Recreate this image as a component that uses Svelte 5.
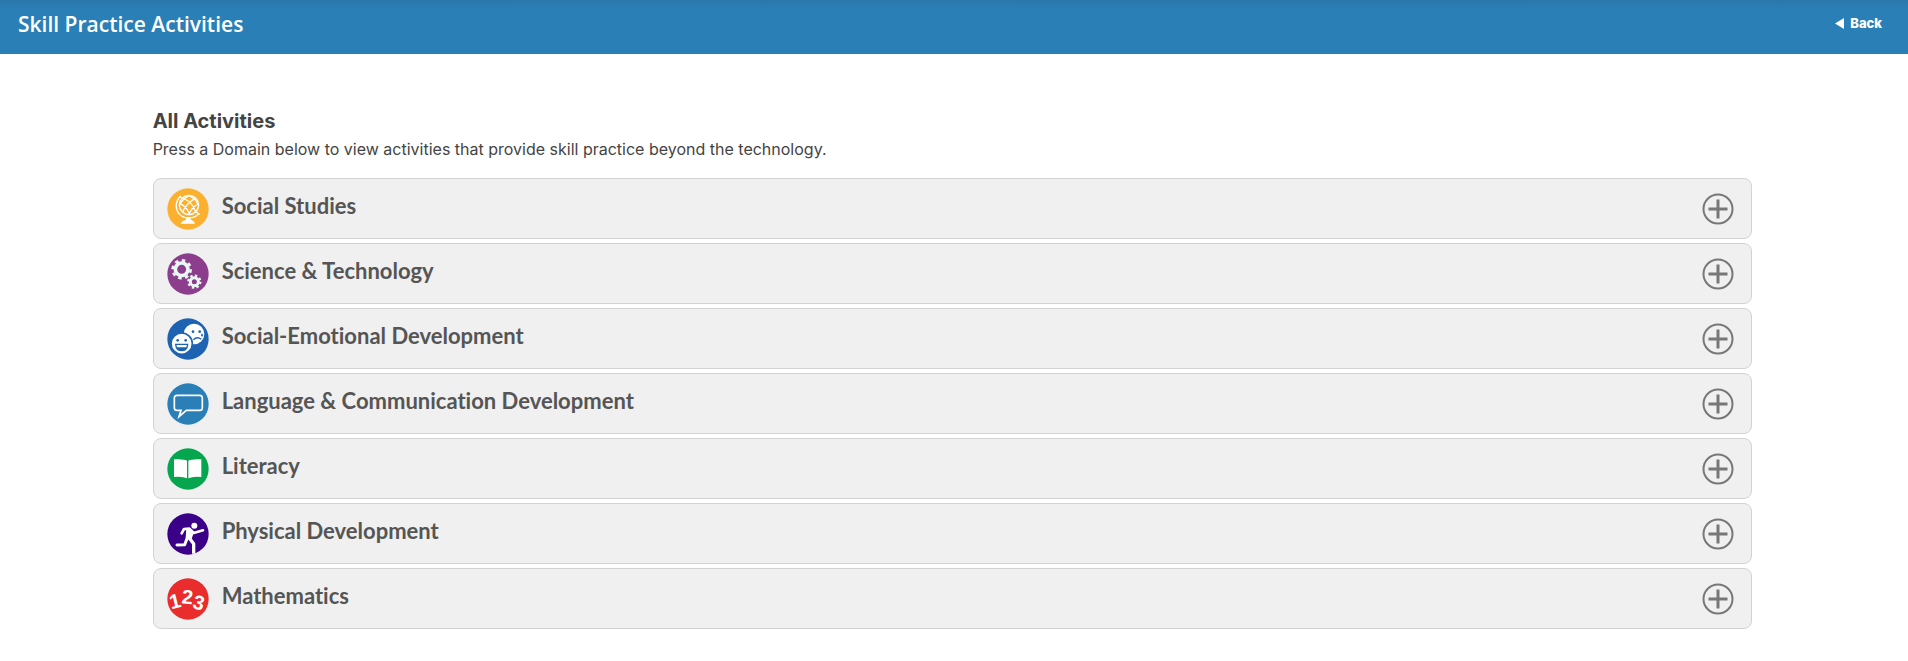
<script lang="ts">
    const domains: { icon: string, label: string, color: string }[] = [
        { icon: "globe", label: "Social Studies", color: "#fbb12f" },
        { icon: "gears", label: "Science & Technology", color: "#8c3e8c" },
        { icon: "faces", label: "Social-Emotional Development", color: "#1d63b2" },
        { icon: "bubble", label: "Language & Communication Development", color: "#2a7fb7" },
        { icon: "book", label: "Literacy", color: "#05a64e" },
        { icon: "runner", label: "Physical Development", color: "#3b0088" },
        { icon: "numbers", label: "Mathematics", color: "#e92d2c" }
    ];
</script>

<header>
    <h1>Skill Practice Activities</h1>
    <a class="back" href="#back">
        <svg width="9" height="11" viewBox="0 0 9 11" aria-hidden="true"><path d="M9 0V11L0 5.5Z" fill="#fff" /></svg>
        Back
    </a>
</header>

<main>
    <h2>All Activities</h2>
    <p>Press a Domain below to view activities that provide skill practice beyond the technology.</p>

    <div class="domains">
        {#each domains as domain}
            <button class="domain">
                <svg class="icon" viewBox="0 0 126 126" aria-hidden="true">
                    <circle cx="63" cy="63" r="62" fill={domain.color} />
                    {#if domain.icon == "globe"}
                        <g fill="none" stroke="#fff" stroke-width="4">
                            <circle cx="66" cy="51" r="29" />
                            <path d="M40 25C20 46 25 79 53 88C70 92 86 88 95 77M38 25L47 31M88 72L97 79" stroke-linecap="round" />
                            <path d="M38 46Q58 54 68 79M47 30Q76 42 86 71M67 23Q86 32 94 50M94 48Q76 56 66 79M86 31Q58 44 47 72M66 23Q47 32 38 50" />
                        </g>
                        <path d="M57 88H71V95Q82 98 84 107H41Q44 98 57 95Z" fill="#fff" />
                    {:else if domain.icon == "gears"}
                        <g fill="none" stroke="#e9f8f2">
                            <circle cx="44" cy="49" r="19" stroke-width="11" />
                            <circle cx="44" cy="49" r="27" stroke-width="8" pathLength="16" stroke-dasharray="1 1" />
                            <circle cx="82" cy="86" r="12" stroke-width="9" />
                            <circle cx="82" cy="86" r="18" stroke-width="7" pathLength="16" stroke-dasharray="1 1" />
                        </g>
                    {:else if domain.icon == "faces"}
                        <circle cx="81" cy="48" r="31" fill="#fff" />
                        <circle cx="78" cy="41" r="4" fill={domain.color} />
                        <circle cx="98" cy="41" r="4" fill={domain.color} />
                        <path d="M105 46Q111 54 105 56Q99 54 105 46Z" fill={domain.color} />
                        <path d="M79 65Q91 54 103 64" fill="none" stroke={domain.color} stroke-width="4" />
                        <circle cx="44" cy="77" r="32" fill="#fff" stroke={domain.color} stroke-width="5" />
                        <circle cx="32" cy="67" r="4" fill={domain.color} />
                        <circle cx="56" cy="67" r="4" fill={domain.color} />
                        <path d="M26 79H62Q60 98 44 98Q28 98 26 79Z" fill="#fff" stroke={domain.color} stroke-width="4" />
                        <path d="M28 88H60Q57 98 44 98Q31 98 28 88Z" fill={domain.color} />
                    {:else if domain.icon == "bubble"}
                        <path d="M30 37H98Q106 37 106 45V74Q106 82 98 82H58L36 101L42 82H30Q22 82 22 74V45Q22 37 30 37Z" fill="none" stroke="#fff" stroke-width="5" />
                    {:else if domain.icon == "book"}
                        <path d="M21 34Q49 32 60 38V91Q45 84 21 87ZM103 34Q75 32 64 38V91Q79 84 103 87Z" fill="#fff" />
                    {:else if domain.icon == "runner"}
                        <circle cx="82" cy="38" r="9" fill="#fff" />
                        <g fill="none" stroke="#fff" stroke-width="8" stroke-linecap="round" stroke-linejoin="round">
                            <path d="M44 61L51 48L67 47L80 60L108 52" />
                            <path d="M61 74L53 95L30 96" stroke-width="9" />
                            <path d="M66 74L80 92V122" stroke-width="10" stroke-linecap="butt" />
                        </g>
                        <path d="M58 45L76 50L80 60L73 80L56 76Z" fill="#fff" />
                    {:else}
                        <text class="digits" x="13 43 74" y="94 76 90" rotate="-14 6 14">123</text>
                    {/if}
                </svg>
                <span class="label">{domain.label}</span>
                <svg class="plus" viewBox="0 0 32 32" aria-hidden="true">
                    <circle cx="16" cy="16" r="14.5" />
                    <path class="bar" d="M16 6.5V25.5M6.5 16H25.5" />
                </svg>
            </button>
        {/each}
    </div>
</main>

<style>
    :global(body) {
        margin: 0;
        background: #fff;
        color: #444;
        font-family: "Liberation Sans", Arial, sans-serif;
    }

    header {
        display: flex;
        justify-content: space-between;
        align-items: flex-start;
        box-sizing: border-box;
        height: 54px;
        padding: 9px 26px 0 18px;
        background: linear-gradient(#2b78aa, #2a7fb7 10px);
        color: #fff;
    }

    h1 {
        margin: 0;
        font: 600 21px/30px "Open Sans", sans-serif;
    }

    .back {
        display: flex;
        align-items: center;
        gap: 6px;
        color: #fff;
        font: 800 13px/28px Inter, sans-serif;
        text-decoration: none;
    }

    main {
        width: 83.8%;
        margin-left: 8%;
        padding-top: 54px;
    }

    h2 {
        margin: 0;
        font: 700 20px/26px Inter, sans-serif;
    }

    p {
        margin: 0;
        padding: 2px 0 16px;
        font: 400 16px/26px Inter, sans-serif;
    }

    .domains {
        display: flex;
        flex-direction: column;
        gap: 4px;
    }

    .domain {
        display: flex;
        align-items: center;
        height: 61px;
        padding: 0 17px 0 13px;
        border: 1px solid #d3d3d3;
        border-radius: 8px;
        background: #f0f0f0;
        color: #555;
        text-align: left;
        cursor: pointer;
    }

    .icon {
        flex: none;
        width: 42px;
        height: 42px;
    }

    .label {
        flex: 1;
        padding: 0 0 6px 13px;
        font: 700 22px/26px Lato, sans-serif;
        font-variant-ligatures: none;
    }

    .plus {
        flex: none;
        width: 32px;
        height: 32px;
        fill: none;
        stroke: #777;
        stroke-width: 2;
    }

    .bar {
        stroke-width: 3;
    }

    .digits {
        fill: #fff;
        font: 700 60px "Liberation Sans", sans-serif;
    }
</style>
